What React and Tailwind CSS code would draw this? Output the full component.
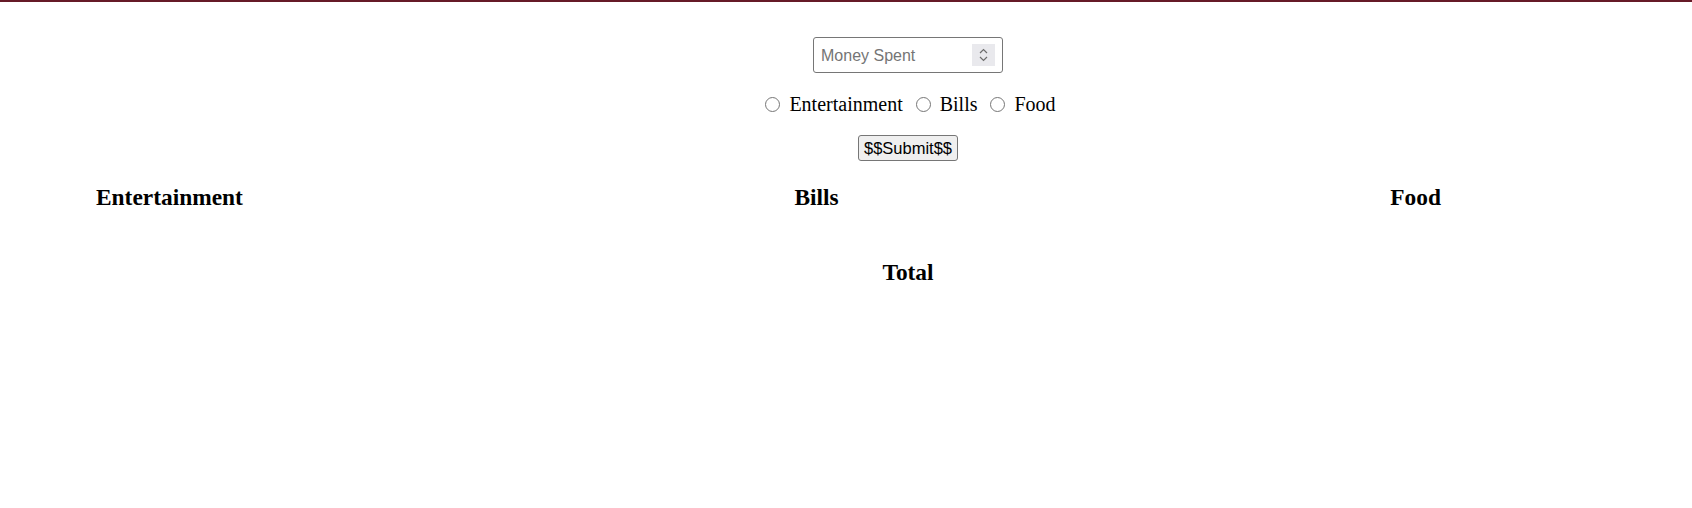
export default function App() {
  const cats = ["Entertainment", "Bills", "Food"];
  return (
    <div className="min-h-[508px] bg-white border-t-2 border-[#661a27] font-['Liberation_Serif',serif] text-black">
      <div className="flex flex-col items-center pl-[124px]">
        <div className="mt-[35px] w-[190px] h-[36px] border border-[#767676] rounded-[3px] flex items-center bg-white">
          <input
            type="text"
            placeholder="Money Spent"
            className="flex-1 min-w-0 bg-transparent outline-none pl-[7px] pt-[2px] text-[16px] font-['Liberation_Sans',Arial,sans-serif] placeholder:text-[#757575]"
          />
          <span className="w-[23px] h-[22px] mr-[7px] bg-[#e9e9ed] flex flex-col items-center justify-center gap-[2px]">
            <svg width="9" height="6" viewBox="0 0 9 6" fill="none">
              <path d="M1 5 L4.5 1.5 L8 5" stroke="#6d6d6d" strokeWidth="1.2" />
            </svg>
            <svg width="9" height="6" viewBox="0 0 9 6" fill="none">
              <path d="M1 1 L4.5 4.5 L8 1" stroke="#6d6d6d" strokeWidth="1.2" />
            </svg>
          </span>
        </div>

        <div className="mt-[20px] pl-[5px] flex items-center text-[20px] leading-[23px]">
          {cats.map((c, i) => (
            <label key={c} className={"flex items-center " + (i > 0 ? "ml-[13px]" : "")}>
              <input
                type="radio"
                name="cat"
                className="appearance-none w-[15px] h-[15px] rounded-full border-[1.5px] border-[#767676] bg-white mr-[9px]"
              />
              <span>{c}</span>
            </label>
          ))}
        </div>

        <button className="mt-[19px] h-[26px] px-[5px] border border-[#767676] rounded-[3px] bg-[#efefef] text-[16.5px] leading-[19px] font-['Liberation_Sans',Arial,sans-serif] text-black">
          $$Submit$$
        </button>
      </div>

      <div className="mt-[23px] flex justify-between pl-[96px] pr-[251px]">
        {cats.map((c) => (
          <h3 key={c} className="text-[23.4px] leading-[26px] font-bold">
            {c}
          </h3>
        ))}
      </div>

      <div className="mt-[49px] flex justify-center pl-[124px]">
        <h3 className="text-[23.4px] leading-[26px] font-bold">Total</h3>
      </div>
    </div>
  );
}
